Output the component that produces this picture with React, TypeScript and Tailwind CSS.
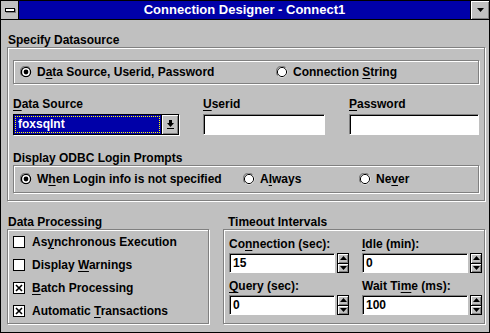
import type { ReactNode } from 'react'

const etched = 'border border-[#808080] shadow-[inset_1px_1px_0_#fff,1px_1px_0_#fff]'
const sunken =
    'bg-white border border-t-[#808080] border-l-[#808080] border-r-white border-b-white shadow-[inset_1px_1px_0_#000]'

function U({ children }: { children: ReactNode }) {
    return <span className="underline decoration-1 underline-offset-[2px]">{children}</span>
}

function Radio({ checked, children }: { checked?: boolean; children: ReactNode }) {
    return (
        <div className="flex items-center gap-[5px]">
            <svg width="12" height="12" viewBox="0 0 12 12">
                <circle cx="6" cy="6" r="5.5" fill="#fff" />
                <path d="M1.8 9.5 A5 5 0 0 1 9.5 1.8" stroke="#808080" strokeWidth="1.2" fill="none" />
                <circle cx="6" cy="6" r="4.6" fill="none" stroke="#000" strokeWidth={checked ? 1.4 : 1} />
                {checked && <circle cx="6" cy="6" r="2.4" fill="#000" />}
            </svg>
            <span>{children}</span>
        </div>
    )
}

function Check({ checked, children }: { checked?: boolean; children: ReactNode }) {
    return (
        <div className="flex items-center gap-[7px] h-[23px]">
            <svg width="12" height="12" viewBox="0 0 12 12">
                <rect x="0.5" y="0.5" width="11" height="11" fill="#fff" stroke="#000" />
                {checked && <path d="M3 3 L9 9 M9 3 L3 9" stroke="#000" strokeWidth="1.6" />}
            </svg>
            <span>{children}</span>
        </div>
    )
}

function Spin() {
    const btn = 'flex-1 flex items-center justify-center bg-[#c0c0c0] shadow-[inset_1px_1px_0_#fff,inset_-1px_-1px_0_#808080]'
    return (
        <div className="flex flex-col w-[12px] h-[20px] border border-black">
            <div className={btn + ' border-b border-black'}>
                <svg width="7" height="4" viewBox="0 0 7 4">
                    <path d="M3.5 0 L7 4 L0 4 Z" fill="#000" />
                </svg>
            </div>
            <div className={btn}>
                <svg width="7" height="4" viewBox="0 0 7 4">
                    <path d="M0 0 L7 0 L3.5 4 Z" fill="#000" />
                </svg>
            </div>
        </div>
    )
}

function SpinField({ label, value, width }: { label: ReactNode; value: string; width: string }) {
    return (
        <div className="flex flex-col">
            <div className="h-[14px] leading-[14px]">{label}</div>
            <div className="flex items-center gap-[2px] mt-[2px]">
                <div className={sunken + ' h-[20px] pl-[3px] leading-[18px] ' + width}>{value}</div>
                <Spin />
            </div>
        </div>
    )
}

export default function App() {
    return (
        <div className="w-[490px] h-[333px] bg-[#c0c0c0] border border-black text-black text-[12px] font-bold font-['Liberation_Sans',Arial,sans-serif] overflow-hidden">
            {/* title bar */}
            <div className="flex h-[19px] border-b border-black">
                <div className="w-[18px] border-r border-black bg-[#c0c0c0] flex items-center justify-center">
                    <div className="w-[10px] h-[4px] bg-white border border-black shadow-[1px_1px_0_#808080]" />
                </div>
                <div className="flex-1 bg-[#0000a8] text-white text-[13px] leading-[18px] text-center">
                    Connection Designer - Connect1
                </div>
                <div className="w-[19px] border-l border-black bg-[#c0c0c0] shadow-[inset_1px_1px_0_#fff,inset_-1px_-1px_0_#808080] flex items-center justify-center">
                    <svg width="7" height="4" viewBox="0 0 7 4">
                        <path d="M0 0 L7 0 L3.5 4 Z" fill="#000" />
                    </svg>
                </div>
            </div>

            <div className="pl-[6px] pt-[13px]">
                <div className="h-[14px] leading-[14px] pl-[1px]">Specify Datasource</div>

                {/* datasource group */}
                <div className={etched + ' w-[478px] h-[154px] px-[5px] pt-[12px]'}>
                    <div className={etched + ' w-[466px] h-[24px] flex items-center pl-[6px]'}>
                        <div className="w-[256px]">
                            <Radio checked>
                                D<U>a</U>ta Source, Userid, Password
                            </Radio>
                        </div>
                        <Radio>
                            Connection <U>S</U>tring
                        </Radio>
                    </div>

                    <div className="flex mt-[13px]">
                        <div className="w-[190px] flex flex-col">
                            <div className="h-[14px] leading-[14px]">
                                <U>D</U>ata Source
                            </div>
                            <div className="mt-[3px] w-[166px] h-[21px] flex border border-black shadow-[1px_1px_0_#fff]">
                                <div className="flex-1 bg-[#0000a8] p-[1px]">
                                    <div className="h-full border border-dotted border-[#ffff00] text-white leading-[15px] pl-[2px]">
                                        foxsqlnt
                                    </div>
                                </div>
                                <div className="w-[17px] border-l border-black bg-[#c0c0c0] shadow-[inset_1px_1px_0_#fff,inset_-1px_-1px_0_#808080] flex items-center justify-center">
                                    <svg width="9" height="10" viewBox="0 0 9 10">
                                        <path d="M3 0 H6 V3 H8 L4.5 7 L1 3 H3 Z" fill="#000" />
                                        <rect x="1" y="8" width="7" height="1" fill="#000" />
                                    </svg>
                                </div>
                            </div>
                        </div>
                        <div className="w-[146px] flex flex-col">
                            <div className="h-[14px] leading-[14px]">
                                <U>U</U>serid
                            </div>
                            <div className={sunken + ' mt-[3px] w-[122px] h-[21px]'} />
                        </div>
                        <div className="flex flex-col">
                            <div className="h-[14px] leading-[14px]">
                                <U>P</U>assword
                            </div>
                            <div className={sunken + ' mt-[3px] w-[130px] h-[21px]'} />
                        </div>
                    </div>

                    <div className="h-[14px] leading-[14px] mt-[16px]">Display ODBC Login Prompts</div>
                    <div className={etched + ' w-[466px] h-[28px] flex items-center pl-[6px]'}>
                        <div className="w-[223px]">
                            <Radio checked>
                                W<U>h</U>en Login info is not specified
                            </Radio>
                        </div>
                        <div className="w-[116px]">
                            <Radio>
                                A<U>l</U>ways
                            </Radio>
                        </div>
                        <Radio>
                            Ne<U>v</U>er
                        </Radio>
                    </div>
                </div>

                {/* bottom groups */}
                <div className="flex mt-[15px] gap-[14px]">
                    <div className="flex flex-col">
                        <div className="h-[13px] leading-[13px] pl-[1px]">Data Processing</div>
                        <div className={etched + ' w-[202px] h-[95px] pl-[5px]'}>
                            <Check>
                                As<U>y</U>nchronous Execution
                            </Check>
                            <Check>
                                Display <U>W</U>arnings
                            </Check>
                            <Check checked>
                                <U>B</U>atch Processing
                            </Check>
                            <Check checked>
                                Automatic <U>T</U>ransactions
                            </Check>
                        </div>
                    </div>
                    <div className="flex flex-col">
                        <div className="h-[13px] leading-[13px] pl-[5px]">Timeout Intervals</div>
                        <div className={etched + ' w-[262px] h-[95px] pl-[5px] pt-[7px]'}>
                            <div className="flex gap-[13px]">
                                <SpinField
                                    label={
                                        <>
                                            Co<U>n</U>nection (sec):
                                        </>
                                    }
                                    value="15"
                                    width="w-[106px]"
                                />
                                <SpinField
                                    label={
                                        <>
                                            <U>I</U>dle (min):
                                        </>
                                    }
                                    value="0"
                                    width="w-[106px]"
                                />
                            </div>
                            <div className="flex gap-[13px] mt-[6px]">
                                <SpinField
                                    label={
                                        <>
                                            <U>Q</U>uery (sec):
                                        </>
                                    }
                                    value="0"
                                    width="w-[106px]"
                                />
                                <SpinField
                                    label={
                                        <>
                                            Wait Ti<U>m</U>e (ms):
                                        </>
                                    }
                                    value="100"
                                    width="w-[106px]"
                                />
                            </div>
                        </div>
                    </div>
                </div>
            </div>
        </div>
    )
}
